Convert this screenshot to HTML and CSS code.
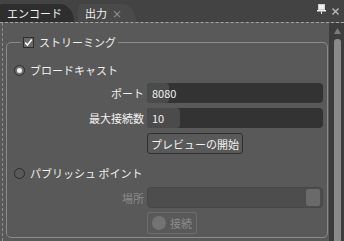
FILE: index.html
```html
<!DOCTYPE html>
<html lang="ja">
<head>
    <meta charset="UTF-8">
    <title>出力</title>
    <link rel="stylesheet" href="styles.css">
</head>
<body>
    <div class="pane">
        <div class="tabbar">
            <div class="tab">エンコード</div>
            <div class="tab active">出力<span class="tab-close">×</span></div>
            <div class="tools">
                <svg class="pin" width="9" height="10" viewBox="0 0 9 10">
                    <rect x="1.5" y="0.5" width="6" height="5" fill="#eeeeee" stroke="#cfcfcf"/>
                    <rect x="0" y="6" width="9" height="1.5" fill="#eeeeee"/>
                    <rect x="4" y="7.5" width="1" height="2.5" fill="#eeeeee"/>
                </svg>
                <svg class="close" width="7" height="7" viewBox="0 0 7 7">
                    <path d="M0.5 0.5 L6.5 6.5 M6.5 0.5 L0.5 6.5" stroke="#bdbdbd" stroke-width="1.3"/>
                </svg>
            </div>
        </div>
        <div class="body">
            <div class="content">
                <fieldset class="group">
                    <legend><span class="check"><svg width="9" height="9" viewBox="0 0 9 9"><path d="M1.2 4.6 L3.4 7 L7.8 1.4" fill="none" stroke="#ffffff" stroke-width="1.6"/></svg></span>ストリーミング</legend>

                    <div class="radio-row"><span class="radio on"></span>ブロードキャスト</div>
                    <div class="form">
                        <label class="lbl">ポート</label>
                        <div class="field glow-short">8080</div>
                        <label class="lbl">最大接続数</label>
                        <div class="field glow-long">10</div>
                        <span></span>
                        <div><button class="btn">プレビューの開始</button></div>
                    </div>

                    <div class="radio-row second"><span class="radio"></span>パブリッシュ ポイント</div>
                    <div class="form lower">
                        <label class="lbl disabled">場所</label>
                        <div class="field off"><span class="browse"></span></div>
                        <span></span>
                        <div><button class="btn off"><span class="dot"></span>接続</button></div>
                    </div>
                </fieldset>
            </div>
            <div class="scrollbar">
                <svg class="arrow" width="7" height="6" viewBox="0 0 7 6"><path d="M3.5 0 L7 6 L0 6 Z" fill="#7c7c7c"/></svg>
                <div class="thumb"></div>
            </div>
        </div>
    </div>
</body>
</html>
```

FILE: styles.css
```css
body {
    margin: 0;
    background-color: #595959;
    font-family: "Noto Sans CJK JP", "Noto Sans", sans-serif;
    font-size: 11px;
    color: #f0f0f0;
}

.pane {
    width: 344px;
    height: 241px;
    display: flex;
    flex-direction: column;
    overflow: hidden;
}

/* tab strip */
.tabbar {
    height: 22px;
    flex: none;
    display: flex;
    align-items: flex-end;
    background-color: #434343;
}

.tab {
    height: 18px;
    line-height: 18px;
    padding: 0 12px 0 7px;
    background-color: #2e2e2e;
    border-radius: 2px 14px 0 0 / 2px 18px 0 0;
    color: #f2f2f2;
}

.tab.active {
    margin-left: 4px;
    padding: 0 14px 0 7px;
    background-color: #4a4a4a;
    border-radius: 4px 14px 0 0 / 4px 18px 0 0;
}

.tab-close {
    margin-left: 5px;
    color: #a8a8a8;
    font-size: 10px;
}

.tools {
    margin-left: auto;
    height: 22px;
    display: flex;
    align-items: center;
    gap: 6px;
    padding-right: 5px;
}

.tools .pin {
    margin-top: -4px;
}

/* body under the dashed line */
.body {
    flex: 1;
    display: flex;
    border-top: 1px dashed #a5a5a5;
}

.content {
    flex: 1;
    margin-left: 2px;
    border-left: 1px dashed #8d8d8d;
    padding: 12px 1px 0 3px;
}

.group {
    margin: 0;
    height: 203px;
    box-sizing: border-box;
    border: 1px solid #8a8a8a;
    border-radius: 5px;
    padding: 13px 4px 0 7px;
}

.group legend {
    margin-left: 7px;
    padding: 0 2px 0 2px;
    line-height: 14px;
    display: flex;
    align-items: center;
    gap: 5px;
}

.check {
    width: 9px;
    height: 9px;
    border: 1px solid #2f2f2f;
    background-color: #6a6a6a;
    display: inline-flex;
}

.radio-row {
    height: 16px;
    display: flex;
    align-items: center;
    gap: 5px;
}

.radio-row.second {
    margin-top: 11px;
}

.radio {
    width: 9px;
    height: 9px;
    border: 1px solid #2c2c2c;
    border-radius: 50%;
    background-color: #5a5a5a;
    display: inline-flex;
    align-items: center;
    justify-content: center;
}

.radio.on {
    background-color: #6d6d6d;
}

.radio.on::after {
    content: "";
    width: 5px;
    height: 5px;
    border-radius: 50%;
    background-color: #f4f4f4;
}

/* label / field grid */
.form {
    margin-top: 5px;
    display: grid;
    grid-template-columns: 130px 1fr;
    column-gap: 3px;
    row-gap: 5px;
    align-items: center;
}

.form.lower {
    margin-top: 6px;
    row-gap: 4px;
}

.lbl {
    text-align: right;
}

.lbl.disabled {
    color: #8c8c8c;
}

.field {
    position: relative;
    height: 20px;
    line-height: 20px;
    padding-left: 5px;
    background-color: #333333;
    border-radius: 4px;
    color: #f2f2f2;
}

.field::before {
    content: "";
    position: absolute;
    left: 0;
    top: 0;
    bottom: 0;
    background-color: #4b4b4b;
    border-radius: 4px;
}

.glow-short::before {
    width: 22px;
}

.glow-long::before {
    width: 33px;
}

.field span,
.field {
    isolation: isolate;
}

.field.off {
    height: 19px;
    background-color: #4d4d4d;
    border: 1px solid #474747;
    display: flex;
    justify-content: flex-end;
    padding: 0;
}

.field.off::before {
    display: none;
}

.browse {
    width: 14px;
    height: 17px;
    margin: 0 1px 0 0;
    align-self: center;
    background-color: #6a6a6a;
    border: 1px solid #4c4c4c;
    border-radius: 3px;
}

.form .field:not(.off) {
    z-index: 0;
}

.field:not(.off)::before {
    z-index: -1;
}

.btn {
    height: 21px;
    padding: 0 3px;
    font-family: inherit;
    font-size: 11px;
    color: #f2f2f2;
    background-color: #595959;
    border: 1px solid #2f2f2f;
    border-radius: 3px;
    display: inline-flex;
    align-items: center;
}

.btn.off {
    height: 22px;
    padding: 0 4px 0 4px;
    color: #8a8a8a;
    border-color: #7a7a7a;
    border-color: #6e6e6e;
    gap: 4px;
}

.dot {
    width: 14px;
    height: 14px;
    border-radius: 50%;
    background-color: #737373;
}

/* right scroll bar */
.scrollbar {
    width: 15px;
    flex: none;
    background-color: #3d3d3d;
    display: flex;
    flex-direction: column;
    align-items: center;
    padding-top: 5px;
    box-sizing: border-box;
}

.arrow {
    margin-left: 1px;
}

.thumb {
    margin: 5px 0 0 1px;
    width: 7px;
    flex: 1;
    background-color: #8a8a8a;
    border-radius: 3px 3px 0 0;
}
```
